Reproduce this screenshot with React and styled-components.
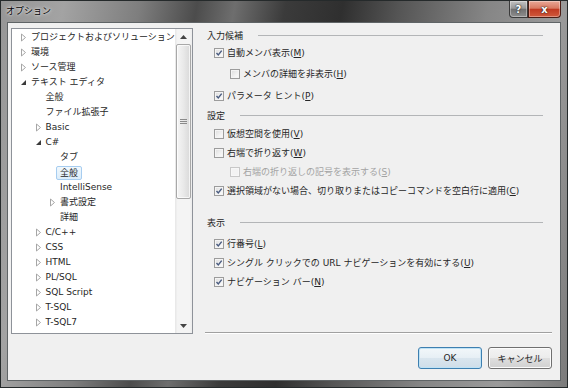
import React from "react";
import styled, { createGlobalStyle } from "styled-components";

const Global = createGlobalStyle`
  html, body { margin: 0; padding: 0; background: #2e3b3d; }
  body {
    font-family: "DejaVu Sans", "Noto Sans CJK JP", sans-serif;
    font-size: 9px;
    color: #262626;
  }
  * { box-sizing: border-box; }
`;

const Window = styled.div`
  width: 568px;
  height: 388px;
  display: flex;
  flex-direction: column;
  padding: 0 6px 6px;
  border: 1px solid #252a2b;
  background: linear-gradient(
    100deg,
    #969696 0%,
    #a3a3a3 10%,
    #7e7e7e 22%,
    #4c4c4c 31%,
    #6e6e6e 37%,
    #3b3b3b 45%,
    #2f2f2f 54%,
    #555 63%,
    #868686 77%,
    #9a9a9a 89%,
    #7b7b7b 100%
  );
`;

const TitleBar = styled.div`
  height: 21px;
  margin: 0 -6px;
  padding: 0 6px 0 5px;
  display: flex;
  align-items: flex-start;
`;

const Title = styled.div`
  flex: 1;
  line-height: 20px;
  font-size: 9px;
  color: #000;
  text-shadow: 0 0 4px rgba(255, 255, 255, 0.9), 0 0 2px rgba(255, 255, 255, 0.8);
`;

const CaptionBtn = styled.div`
  height: 17px;
  width: ${(p) => (p.$close ? 33 : 19)}px;
  display: flex;
  align-items: center;
  justify-content: center;
  border: 1px solid ${(p) => (p.$close ? "#4a1d15" : "#3a3a3a")};
  border-top: none;
  border-radius: ${(p) => (p.$close ? "0 0 4px 0" : "0 0 0 4px")};
  background: ${(p) =>
    p.$close
      ? "linear-gradient(#e9a897 0%, #d97a62 45%, #c13a22 52%, #d0593c 100%)"
      : "linear-gradient(#c2c2c2 0%, #999 45%, #717171 52%, #8e8e8e 100%)"};
  color: #fff;
  font-family: "DejaVu Sans", sans-serif;
  font-weight: bold;
  font-size: 10px;
  text-shadow: 0 0 2px #222, 0 0 1px #222;
  box-shadow: inset 0 0 0 1px rgba(255, 255, 255, 0.35);
`;

const Client = styled.div`
  flex: 1;
  display: flex;
  flex-direction: column;
  background: #f0f0f0;
  border: 1px solid #5f6466;
  padding: 5px 8px 11px 3px;
`;

const Main = styled.div`
  height: 306px;
  display: flex;
  gap: 12px;
`;

const Tree = styled.div`
  width: 182px;
  height: 100%;
  display: flex;
  border: 1px solid #8e9299;
  background: #fff;
`;

const TreeList = styled.div`
  flex: 1;
  padding-top: 1px;
  overflow: hidden;
`;

const TreeRow = styled.div`
  height: 15px;
  display: flex;
  align-items: center;
  padding-left: ${(p) => 8 + p.$level * 14.5}px;
  white-space: nowrap;
  line-height: 15px;
`;

const Expander = styled.svg`
  width: 10px;
  height: 15px;
  flex: none;
  margin-right: 1px;
`;

const Selected = styled.span`
  height: 14px;
  line-height: 12px;
  padding: 0 3px;
  margin-left: -4px;
  border: 1px solid #a7cdf0;
  border-radius: 2px;
  background: linear-gradient(#f1f8fd, #dcedfa);
`;

const ScrollBar = styled.div`
  width: 17px;
  display: flex;
  flex-direction: column;
  background: linear-gradient(90deg, #e6e6e6 0%, #f4f4f4 15%, #f4f4f4 85%, #ececec 100%);
`;

const ArrowBtn = styled.div`
  height: 15px;
  display: flex;
  align-items: center;
  justify-content: center;
`;

const Thumb = styled.div`
  height: 155px;
  margin: 0 1px;
  display: flex;
  align-items: center;
  justify-content: center;
  border: 1px solid #a8a8a8;
  border-radius: 2px;
  background: linear-gradient(90deg, #f5f5f5 0%, #e9e9e9 50%, #d9d9d9 100%);
  box-shadow: inset 0 0 0 1px rgba(255, 255, 255, 0.7);
`;

const Track = styled.div`
  flex: 1;
`;

const RightCol = styled.div`
  flex: 1;
  display: flex;
  flex-direction: column;
`;

const Options = styled.div`
  flex: 1;
  padding: 0 9px 0 2px;
`;

const Header = styled.div`
  height: 15px;
  margin-top: ${(p) => p.$mt || 0}px;
  display: flex;
  align-items: center;
  gap: 15px;
  &::after {
    content: "";
    flex: 1;
    height: 1px;
    background: #b3b5b7;
  }
`;

const CheckRow = styled.div`
  height: 19px;
  margin-top: ${(p) => p.$mt || 0}px;
  display: flex;
  align-items: center;
  gap: 3px;
  padding-left: ${(p) => (p.$nested ? 23 : 7)}px;
  white-space: nowrap;
  color: ${(p) => (p.$disabled ? "#a3a3a3" : "#262626")};
`;

const Box = styled.span`
  width: 10px;
  height: 10px;
  flex: none;
  display: flex;
  align-items: center;
  justify-content: center;
  border: 1px solid ${(p) => (p.$disabled ? "#c8c8c8" : "#9c9c9c")};
  background: ${(p) =>
    p.$disabled ? "#f3f3f3" : "linear-gradient(135deg, #dcdcdc 0%, #f2f2f2 60%, #fdfdfd 100%)"};
  box-shadow: inset 0 0 0 1px ${(p) => (p.$disabled ? "#f7f7f7" : "#f4f4f4")};
`;

const Mn = styled.span`
  text-decoration: underline;
  text-underline-offset: 1px;
`;

const Separator = styled.div`
  height: 2px;
  border-top: 1px solid #a0a0a0;
  border-bottom: 1px solid #fff;
`;

const ButtonRow = styled.div`
  margin-top: 13px;
  display: flex;
  justify-content: flex-end;
  gap: 6px;
`;

const Button = styled.button`
  width: 64px;
  height: 22px;
  padding: 0;
  font: inherit;
  color: #262626;
  border-radius: 3px;
  border: 1px solid ${(p) => (p.$default ? "#3d7fb0" : "#707070")};
  background: ${(p) =>
    p.$default
      ? "linear-gradient(#f2f7fa 0%, #e7eff5 48%, #d9e5ee 52%, #cfdde8 100%)"
      : "linear-gradient(#f3f3f3 0%, #ececec 48%, #dedede 52%, #d1d1d1 100%)"};
  box-shadow: inset 0 0 0 1px ${(p) => (p.$default ? "#bfe2f5" : "#fcfcfc")};
`;

const treeItems = [
  { level: 0, label: "プロジェクトおよびソリューション", state: "closed" },
  { level: 0, label: "環境", state: "closed" },
  { level: 0, label: "ソース管理", state: "closed" },
  { level: 0, label: "テキスト エディタ", state: "open" },
  { level: 1, label: "全般" },
  { level: 1, label: "ファイル拡張子" },
  { level: 1, label: "Basic", state: "closed" },
  { level: 1, label: "C#", state: "open" },
  { level: 2, label: "タブ" },
  { level: 2, label: "全般", selected: true },
  { level: 2, label: "IntelliSense" },
  { level: 2, label: "書式設定", state: "closed" },
  { level: 2, label: "詳細" },
  { level: 1, label: "C/C++", state: "closed" },
  { level: 1, label: "CSS", state: "closed" },
  { level: 1, label: "HTML", state: "closed" },
  { level: 1, label: "PL/SQL", state: "closed" },
  { level: 1, label: "SQL Script", state: "closed" },
  { level: 1, label: "T-SQL", state: "closed" },
  { level: 1, label: "T-SQL7", state: "closed" },
];

const ExpandIcon = ({ state }) => (
  <Expander viewBox="0 0 10 15">
    {state === "closed" && (
      <polygon points="1.5,4 5.5,7.5 1.5,11" fill="#fff" stroke="#a6a6a6" strokeWidth="1" />
    )}
    {state === "open" && <polygon points="6,5 6,10 1,10" fill="#3a3a3a" />}
  </Expander>
);

const Check = ({ checked, disabled, nested, mt, children }) => (
  <CheckRow $nested={nested} $disabled={disabled} $mt={mt}>
    <Box $disabled={disabled}>
      {checked && (
        <svg width="8" height="8" viewBox="0 0 8 8">
          <polyline points="1.5,4 3.3,6 6.7,1.6" fill="none" stroke="#4a5c80" strokeWidth="1.4" />
        </svg>
      )}
    </Box>
    <span>{children}</span>
  </CheckRow>
);

export default function App() {
  return (
    <>
      <Global />
      <Window>
        <TitleBar>
          <Title>オプション</Title>
          <CaptionBtn>?</CaptionBtn>
          <CaptionBtn $close>x</CaptionBtn>
        </TitleBar>
        <Client>
          <Main>
            <Tree>
              <TreeList>
                {treeItems.map((it, i) => (
                  <TreeRow key={i} $level={it.level}>
                    <ExpandIcon state={it.state} />
                    {it.selected ? <Selected>{it.label}</Selected> : <span>{it.label}</span>}
                  </TreeRow>
                ))}
              </TreeList>
              <ScrollBar>
                <ArrowBtn>
                  <svg width="7" height="4" viewBox="0 0 7 4">
                    <polygon points="0,4 3.5,0 7,4" fill="#444" />
                  </svg>
                </ArrowBtn>
                <Thumb>
                  <svg width="7" height="6" viewBox="0 0 7 6">
                    <line x1="0" y1="0.5" x2="7" y2="0.5" stroke="#8a8a8a" />
                    <line x1="0" y1="2.5" x2="7" y2="2.5" stroke="#8a8a8a" />
                    <line x1="0" y1="4.5" x2="7" y2="4.5" stroke="#8a8a8a" />
                  </svg>
                </Thumb>
                <Track />
                <ArrowBtn>
                  <svg width="7" height="4" viewBox="0 0 7 4">
                    <polygon points="0,0 3.5,4 7,0" fill="#444" />
                  </svg>
                </ArrowBtn>
              </ScrollBar>
            </Tree>
            <RightCol>
              <Options>
                <Header>入力候補</Header>
                <Check checked>
                  自動メンバ表示(<Mn>M</Mn>)
                </Check>
                <Check nested mt={2}>
                  メンバの詳細を非表示(<Mn>H</Mn>)
                </Check>
                <Check checked mt={3}>
                  パラメータ ヒント(<Mn>P</Mn>)
                </Check>
                <Header $mt={3}>設定</Header>
                <Check mt={1}>
                  仮想空間を使用(<Mn>V</Mn>)
                </Check>
                <Check>
                  右端で折り返す(<Mn>W</Mn>)
                </Check>
                <Check nested disabled>
                  右端の折り返しの記号を表示する(<Mn>S</Mn>)
                </Check>
                <Check checked>
                  選択領域がない場合、切り取りまたはコピーコマンドを空白行に適用(<Mn>C</Mn>)
                </Check>
                <Header $mt={15}>表示</Header>
                <Check checked mt={4}>
                  行番号(<Mn>L</Mn>)
                </Check>
                <Check checked>
                  シングル クリックでの URL ナビゲーションを有効にする(<Mn>U</Mn>)
                </Check>
                <Check checked>
                  ナビゲーション バー(<Mn>N</Mn>)
                </Check>
              </Options>
              <Separator />
            </RightCol>
          </Main>
          <ButtonRow>
            <Button $default>OK</Button>
            <Button>キャンセル</Button>
          </ButtonRow>
        </Client>
      </Window>
    </>
  );
}
